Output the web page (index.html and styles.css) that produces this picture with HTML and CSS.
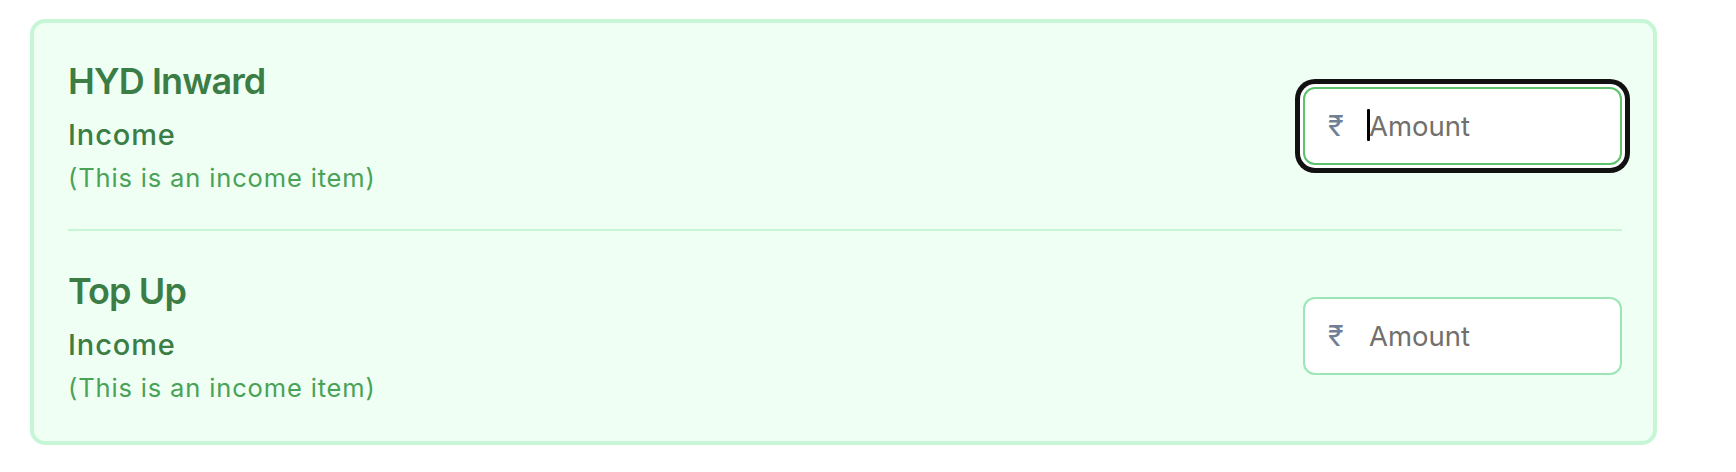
FILE: index.html
```html
<!DOCTYPE html>
<html lang="en">
<head>
<meta charset="utf-8">
<title>Income items</title>
<link rel="stylesheet" href="styles.css">
</head>
<body>
<main class="page">
  <section class="card">
    <div class="item">
      <div class="item-info">
        <h3 class="item-title">HYD Inward</h3>
        <p class="item-type">Income</p>
        <p class="item-note">(This is an income item)</p>
      </div>
      <label class="amount amount-focused">
        <span class="amount-icon">₹</span>
        <span class="amount-field">
          <span class="caret"></span>
          <input class="amount-input" type="text" placeholder="Amount">
        </span>
      </label>
    </div>
    <hr class="divider">
    <div class="item item-last">
      <div class="item-info">
        <h3 class="item-title">Top Up</h3>
        <p class="item-type">Income</p>
        <p class="item-note">(This is an income item)</p>
      </div>
      <label class="amount">
        <span class="amount-icon">₹</span>
        <span class="amount-field">
          <input class="amount-input" type="text" placeholder="Amount">
        </span>
      </label>
    </div>
  </section>
</main>
</body>
</html>
```

FILE: styles.css
```css
* {
  box-sizing: border-box;
}

html, body {
  margin: 0;
  background: #ffffff;
}

body {
  font-family: Inter, "Noto Sans", "DejaVu Sans", sans-serif;
}

.page {
  padding: 19px 79px 0 30px;
}

.card {
  background: #f0fff4;
  border: 4px solid #c6f6d5;
  border-radius: 15px;
  padding: 36px 31px 35px 34px;
}

.item {
  display: flex;
  justify-content: space-between;
  align-items: center;
  padding-bottom: 33px;
}

.item-last {
  padding-top: 38px;
  padding-bottom: 0;
}

.item-info {
  display: flex;
  flex-direction: column;
}

.item-title {
  margin: 0;
  font-size: 36px;
  line-height: 44px;
  font-weight: 600;
  letter-spacing: -0.9px;
  color: #3b7d45;
}

.item-type {
  margin: 12px 0 0;
  font-size: 29px;
  line-height: 40px;
  font-weight: 500;
  letter-spacing: 0.9px;
  color: #3b7d45;
}

.item-note {
  margin: 5px 0 0;
  font-size: 25.5px;
  line-height: 36px;
  font-weight: 400;
  letter-spacing: 0.85px;
  color: #4aa257;
}

.divider {
  margin: 0;
  border: 0;
  height: 2px;
  background: #c6f6d5;
}

.amount {
  width: 319px;
  height: 78px;
  margin-bottom: 4px;
  display: flex;
  align-items: center;
  background: #ffffff;
  border: 2px solid #9ae6b4;
  border-radius: 12px;
}

.amount-focused {
  border-color: #5cc26c;
  box-shadow: 0 0 0 3px #ffffff, 0 0 0 8px #111111;
}

.amount-icon {
  width: 16px;
  margin-left: 23px;
  margin-right: 25px;
  font-size: 29px;
  line-height: 1;
  color: #718096;
}

.amount-field {
  position: relative;
  flex: 1;
  display: flex;
  align-items: center;
}

.amount-input {
  width: 100%;
  border: 0;
  outline: none;
  background: transparent;
  padding: 0;
  font-family: Inter, "Noto Sans", sans-serif;
  font-size: 27.5px;
  color: #1a202c;
}

.amount-input::placeholder {
  color: #726f6c;
  opacity: 1;
}

.caret {
  position: absolute;
  left: -2px;
  top: 50%;
  width: 3px;
  height: 32px;
  margin-top: -17px;
  background: #000000;
  border-radius: 1px;
}
```
